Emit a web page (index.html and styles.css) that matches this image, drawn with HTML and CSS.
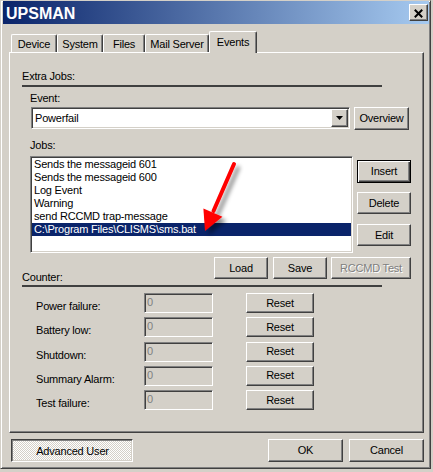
FILE: index.html
```html
<!DOCTYPE html>
<html>
<head>
<meta charset="utf-8">
<title>UPSMAN</title>
<link rel="stylesheet" href="styles.css">
</head>
<body>
<div class="window">
  <div class="titlebar">
    <span class="title">UPSMAN</span>
    <span class="close"><svg width="9" height="9" viewBox="0 0 9 9"><path d="M0.8 0.8L8.2 8.2M8.2 0.8L0.8 8.2" stroke="#000" stroke-width="2"/></svg></span>
  </div>
  <div class="tabs">
    <div class="tab t-device">Device</div>
    <div class="tab t-system">System</div>
    <div class="tab t-files">Files</div>
    <div class="tab t-mail">Mail Server</div>
    <div class="tab t-events active">Events</div>
  </div>
  <div class="panel">
    <div class="group-label">Extra Jobs:</div>
    <div class="sep"></div>
    <div class="field-label event-label">Event:</div>
    <div class="event-row">
      <div class="combo">
        <span class="combo-text">Powerfail</span>
        <span class="dd"><svg width="7" height="4" viewBox="0 0 7 4"><path d="M0 0H7L3.5 4Z" fill="#000"/></svg></span>
      </div>
      <div class="btn overview">Overview</div>
    </div>
    <div class="field-label jobs-label">Jobs:</div>
    <div class="jobs-row">
      <div class="listbox">
        <div class="item">Sends the messageid 601</div>
        <div class="item">Sends the messageid 600</div>
        <div class="item">Log Event</div>
        <div class="item">Warning</div>
        <div class="item">send RCCMD trap-message</div>
        <div class="item selected">C:\Program Files\CLISMS\sms.bat</div>
      </div>
      <div class="side">
        <div class="btn default side-btn">Insert</div>
        <div class="btn side-btn delete">Delete</div>
        <div class="btn side-btn edit">Edit</div>
      </div>
    </div>
    <div class="action-row">
      <div class="counter-label">Counter:</div>
      <div class="btn act load">Load</div>
      <div class="btn act save">Save</div>
      <div class="btn act rccmd disabled">RCCMD Test</div>
    </div>
    <div class="sep sep2"></div>
    <div class="counters">
      <div class="crow"><div class="clabel">Power failure:</div><div class="cinput">0</div><div class="btn reset">Reset</div></div>
      <div class="crow"><div class="clabel">Battery low:</div><div class="cinput">0</div><div class="btn reset">Reset</div></div>
      <div class="crow"><div class="clabel">Shutdown:</div><div class="cinput">0</div><div class="btn reset">Reset</div></div>
      <div class="crow"><div class="clabel">Summary Alarm:</div><div class="cinput">0</div><div class="btn reset">Reset</div></div>
      <div class="crow"><div class="clabel">Test failure:</div><div class="cinput">0</div><div class="btn reset">Reset</div></div>
    </div>
  </div>
  <div class="footer">
    <div class="btn pressed advanced">Advanced User</div>
    <div class="btn ok">OK</div>
    <div class="btn cancel">Cancel</div>
  </div>
  <svg class="arrow" width="433" height="472" viewBox="0 0 433 472">
    <defs>
      <filter id="sh" x="-50%" y="-50%" width="200%" height="200%">
        <feDropShadow dx="4" dy="4" stdDeviation="2" flood-color="#000" flood-opacity="0.45"/>
      </filter>
    </defs>
    <g filter="url(#sh)">
      <path d="M234 164L213.5 211" stroke="#f00" stroke-width="4" stroke-linecap="round"/>
      <path d="M205 231L203.4 208.4L222.4 216.8Z" fill="#f00"/>
    </g>
  </svg>
</div>
</body>
</html>
```
FILE: styles.css
```css
* { box-sizing: border-box; }
body {
  margin: 0;
  background: #d4d0c8;
  font-family: "Liberation Sans", Arial, sans-serif;
  font-size: 11px;
  letter-spacing: -0.2px;
  line-height: 13px;
  color: #000;
}
.window {
  position: relative;
  width: 431px;
  height: 469px;
  border: 1px solid;
  border-color: #d4d0c8 #404040 #404040 #d4d0c8;
  box-shadow: inset 1px 1px #fff, inset -1px -1px #808080;
  padding: 0 1px 0 2px;
  background: #d4d0c8;
}
.titlebar {
  display: flex;
  align-items: flex-start;
  height: 23px;
  background: linear-gradient(to right, #0a246a, #a6caf0);
  color: #fff;
  padding: 0 1px 0 3px;
}
.title {
  font-size: 16px;
  font-weight: bold;
  letter-spacing: 0;
  line-height: 20px;
  padding-top: 3px;
}
.close {
  margin-left: auto;
  margin-top: 3px;
  width: 19px;
  height: 17px;
  display: flex;
  align-items: center;
  justify-content: center;
  padding-top: 1px;
  background: #d4d0c8;
  border: 1px solid;
  border-color: #fff #404040 #404040 #fff;
  box-shadow: inset -1px -1px #808080;
}
.close svg { display: block; }
.tabs {
  display: flex;
  align-items: flex-end;
  height: 21px;
  margin-top: 7px;
  padding-left: 8px;
}
.tab {
  height: 18px;
  border-left: 1px solid #fff;
  border-top: 1px solid #fff;
  border-right: 1px solid #404040;
  box-shadow: inset -1px 0 #808080;
  border-radius: 2px 2px 0 0;
  padding-top: 3px;
  text-align: center;
  white-space: nowrap;
}
.t-device { width: 46px; }
.t-system { width: 46px; }
.t-files { width: 42px; }
.t-mail { width: 64px; }
.t-events { width: 48px; }
.tab.active {
  position: relative;
  z-index: 1;
  height: 22px;
  margin-bottom: -1px;
  background: #d4d0c8;
  padding-top: 4px;
}
.panel {
  width: 415px;
  height: 381px;
  margin-left: 6px;
  border: 1px solid;
  border-color: #fff #404040 #404040 #fff;
  box-shadow: inset -1px -1px #808080;
}
.group-label { margin: 17px 0 0 12px; }
.sep {
  width: 360px;
  height: 2px;
  background: #404040;
  margin: 2px 0 0 12px;
}
.sep2 { margin-top: 1px; }
.event-label { margin: 5px 0 0 20px; }
.jobs-label { margin: 9px 0 0 20px; }
.event-row {
  display: flex;
  margin: 2px 0 0 21px;
}
.sunken {
  border: 1px solid;
}
.combo {
  display: flex;
  align-items: center;
  width: 319px;
  height: 22px;
  padding: 1px;
  background: #fff;
  border: 1px solid;
  border-color: #808080 #fff #fff #808080;
  box-shadow: inset 1px 1px #404040, inset -1px -1px #d4d0c8;
}
.combo-text { padding-left: 2px; }
.dd {
  margin-left: auto;
  width: 17px;
  height: 18px;
  display: flex;
  align-items: center;
  justify-content: center;
  background: #d4d0c8;
  border: 1px solid;
  border-color: #fff #404040 #404040 #fff;
  box-shadow: inset -1px -1px #808080;
}
.dd svg { display: block; }
.btn {
  display: flex;
  align-items: center;
  justify-content: center;
  white-space: nowrap;
  background: #d4d0c8;
  border: 1px solid;
  border-color: #fff #404040 #404040 #fff;
  box-shadow: inset -1px -1px #808080;
}
.btn.default {
  border-color: #000;
  box-shadow: inset 1px 1px #fff, inset -1px -1px #404040, inset -2px -2px #808080;
}
.btn.disabled {
  color: #808080;
  text-shadow: 1px 1px #fff;
}
.btn.pressed {
  border-color: #404040 #fff #fff #404040;
  box-shadow: inset 1px 1px #808080, inset -1px -1px #d4d0c8;
  background: repeating-conic-gradient(#fff 0 25%, #d4d0c8 0 50%) 0 0 / 2px 2px;
  padding: 1px 0 0 1px;
}
.overview {
  width: 55px;
  height: 23px;
  margin-left: 4px;
}
.jobs-row {
  display: flex;
  margin: 4px 0 0 20px;
}
.listbox {
  width: 323px;
  height: 97px;
  padding: 1px;
  background: #fff;
  border: 1px solid;
  border-color: #808080 #fff #fff #808080;
  box-shadow: inset 1px 1px #404040, inset -1px -1px #d4d0c8;
}
.item {
  height: 13px;
  padding-left: 2px;
  white-space: nowrap;
}
.item.selected {
  background: #0a246a;
  color: #fff;
}
.side {
  display: flex;
  flex-direction: column;
  margin-left: 4px;
  padding-top: 4px;
}
.side-btn { width: 54px; height: 22px; }
.side-btn.default { height: 23px; }
.delete { margin-top: 9px; }
.edit { margin-top: 10px; }
.action-row {
  display: flex;
  align-items: flex-end;
  margin-top: 4px;
  padding: 0 12px;
}
.counter-label { flex: 1; }
.act {
  height: 22px;
  margin-bottom: 5px;
}
.load { width: 54px; }
.save { width: 54px; margin-left: 5px; }
.rccmd { width: 80px; margin-left: 4px; }
.counters { margin-top: 6px; }
.crow {
  display: flex;
  height: 20px;
}
.crow + .crow { margin-top: 4.25px; }
.clabel {
  width: 108px;
  margin-left: 26px;
  padding-top: 7px;
  white-space: nowrap;
}
.cinput {
  width: 69px;
  height: 20px;
  padding: 2px 0 0 2px;
  color: #808080;
  background: #d4d0c8;
  border: 1px solid;
  border-color: #808080 #fff #fff #808080;
  box-shadow: inset 1px 1px #404040, inset -1px -1px #d4d0c8;
}
.reset {
  width: 68px;
  height: 20px;
  margin-left: 33px;
}
.footer {
  display: flex;
  margin-top: 6px;
  padding: 0 5px 0 8px;
}
.advanced { width: 122px; height: 23px; }
.ok { width: 75px; height: 23px; margin-left: auto; }
.cancel { width: 75px; height: 23px; margin-left: 6px; }
.arrow {
  position: absolute;
  left: -1px;
  top: -1px;
  pointer-events: none;
}
```
